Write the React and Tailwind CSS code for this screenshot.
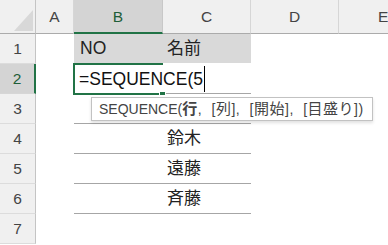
import React from "react";

const font = { fontFamily: '"Liberation Sans", "Noto Sans CJK JP", sans-serif' };

function ColHead({ label, selected, last }) {
  return (
    <div
      className={
        selected
          ? "flex items-center justify-center bg-[#d4d4d4] border-b-2 border-b-[#217346] border-r border-r-[#c8c8c8] text-[15.5px] text-[#1f5e38] pt-[1px]"
          : last
          ? "flex items-center justify-start pl-[39px] bg-[#f0f0f0] border-b border-b-[#ababab] text-[15.5px] text-[#444]"
          : "flex items-center justify-center bg-[#f0f0f0] border-b border-b-[#ababab] border-r border-r-[#d6d6d6] text-[15.5px] text-[#444]"
      }
    >
      {label}
    </div>
  );
}

function RowHead({ n, selected }) {
  return (
    <div
      className={
        selected
          ? "flex items-center justify-center bg-[#d4d4d4] border-r-2 border-r-[#217346] border-b border-b-[#d6d6d6] text-[15.5px] text-[#1f5e38]"
          : "flex items-center justify-center bg-[#f0f0f0] border-r border-r-[#c4c4c4] border-b border-b-[#dcdcdc] text-[15.5px] text-[#444]"
      }
    >
      {n}
    </div>
  );
}

export default function App() {
  const names = ["", "鈴木", "遠藤", "斉藤"];

  return (
    <div
      className="relative w-[388px] h-[245px] overflow-hidden bg-white"
      style={font}
    >
      <div className="grid grid-cols-[36px_38px_89px_88px_88px_49px] grid-rows-[34px_repeat(7,30px)]">
        {/* header row */}
        <div className="relative bg-[#f0f0f0] border-b border-b-[#ababab] border-r border-r-[#c4c4c4]">
          <svg className="absolute left-0 top-0" width="36" height="34">
            <polygon points="33,10 33,31 14,31" fill="#d8d8d8" />
          </svg>
        </div>
        <ColHead label="A" />
        <ColHead label="B" selected />
        <ColHead label="C" />
        <ColHead label="D" />
        <ColHead label="E" last />

        {/* row 1 */}
        <RowHead n={1} />
        <div />
        <div className="bg-[#d9d9d9] mb-[1px] flex items-center pl-[6px] text-[17.5px] text-[#222]">
          NO
        </div>
        <div className="bg-[#d9d9d9] mb-[1px] flex items-center pl-[4px] text-[17px] text-[#222]">
          名前
        </div>
        <div />
        <div />

        {/* row 2 */}
        <RowHead n={2} selected />
        <div />
        <div className="relative -ml-[1px] -mt-[1px] h-[32px] border-2 border-r-0 border-[#217346] bg-white">
          <div className="absolute left-[4px] top-0 h-[28px] flex items-center whitespace-nowrap text-[17.5px] text-[#111]">
            =SEQUENCE(5
            <span className="ml-[1px] inline-block w-[1px] h-[26px] bg-black" />
          </div>
          <div className="absolute -right-[3px] -bottom-[3px] w-[7px] h-[5px] bg-[#217346] border border-white" />
        </div>
        <div className="border-b border-b-[#a6a6a6]" />
        <div />
        <div />

        {/* rows 3-7 */}
        {[3, 4, 5, 6, 7].map((n, i) => (
          <React.Fragment key={n}>
            <RowHead n={n} />
            <div />
            <div className={n < 7 ? "border-b border-b-[#a6a6a6]" : ""} />
            <div
              className={
                n < 7
                  ? "border-b border-b-[#a6a6a6] flex items-center pl-[4px] text-[17px] text-[#222]"
                  : "flex items-center pl-[4px] text-[17px] text-[#222]"
              }
            >
              {names[i] || ""}
            </div>
            <div />
            <div />
          </React.Fragment>
        ))}
      </div>

      {/* function tooltip */}
      <div className="absolute left-[91px] top-[97px] w-[282px] h-[24px] flex items-center pl-[7px] bg-white border border-[#c2c2c2] shadow-[0_2px_3px_rgba(0,0,0,0.12)] whitespace-nowrap text-[14px] text-[#444]">
        SEQUENCE(
        <span className="text-[14px] tracking-[0.5px] [word-spacing:5px]">
          <span className="font-bold text-[15px]">行</span>,{" "}
          [<span className="text-[15px]">列</span>],{" "}
          [<span className="text-[15px]">開始</span>],{" "}
          [<span className="text-[15px]">目盛り</span>])
        </span>
      </div>
    </div>
  );
}
